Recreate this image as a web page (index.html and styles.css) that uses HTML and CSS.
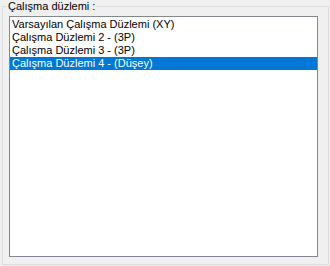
FILE: index.html
```html
<!DOCTYPE html>
<html lang="tr">
<head>
  <meta charset="UTF-8">
  <title>Çalışma düzlemi</title>
  <link rel="stylesheet" href="styles.css">
</head>
<body>
  <fieldset class="group">
    <legend class="group-label">Çalışma düzlemi :</legend>
    <ul class="listbox">
      <li class="item">Varsayılan Çalışma Düzlemi (XY)</li>
      <li class="item">Çalışma Düzlemi 2 - (3P)</li>
      <li class="item">Çalışma Düzlemi 3 - (3P)</li>
      <li class="item selected">Çalışma Düzlemi 4 - (Düşey)</li>
    </ul>
  </fieldset>
</body>
</html>
```

FILE: styles.css
```css
html, body {
  margin: 0;
  height: 100%;
}
body {
  background-color: #f0f0f0;
  font-family: "Liberation Sans", Arial, sans-serif;
  font-size: 11px;
  color: #000;
}
.group {
  margin: 0 1px 1px 2px;
  padding: 3px 10px 6px 6px;
  border: 1px solid #dcdcdc;
  height: 265px;
  box-sizing: border-box;
}
.group-label {
  padding: 0 1px;
  margin-left: -2px;
  line-height: 13px;
}
.listbox {
  list-style: none;
  margin: 0;
  padding: 1px 0;
  height: 241px;
  box-sizing: border-box;
  background-color: #fff;
  border: 1px solid #828790;
}
.item {
  line-height: 13px;
  padding: 0 2px;
  white-space: nowrap;
}
.selected {
  background-color: #0078d7;
  color: #fff;
}
```
